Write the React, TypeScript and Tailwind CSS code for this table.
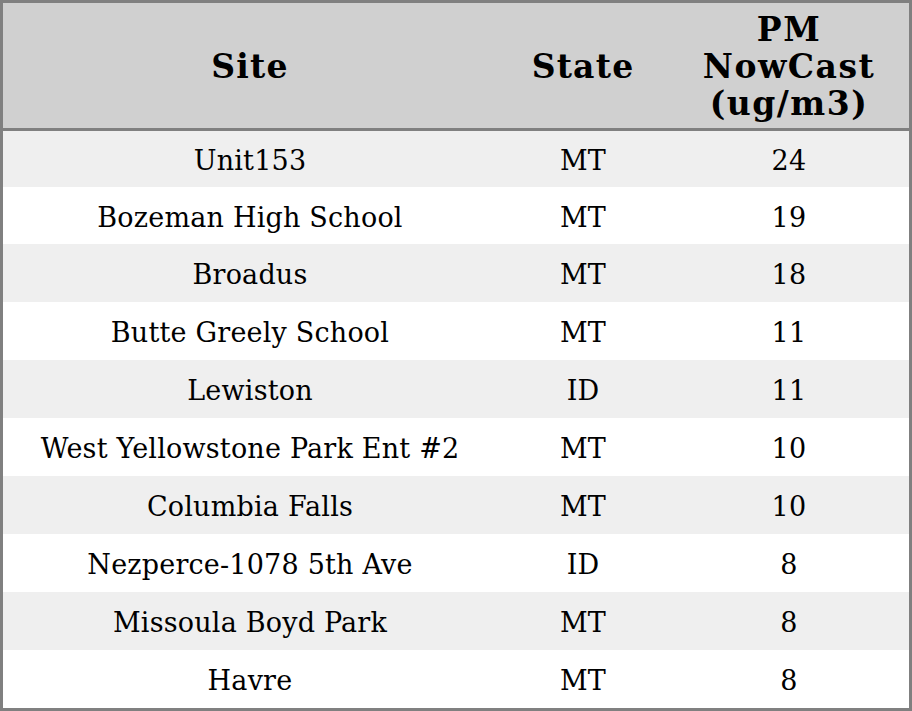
const rows: [string, string, string][] = [
  ["Unit153", "MT", "24"],
  ["Bozeman High School", "MT", "19"],
  ["Broadus", "MT", "18"],
  ["Butte Greely School", "MT", "11"],
  ["Lewiston", "ID", "11"],
  ["West Yellowstone Park Ent #2", "MT", "10"],
  ["Columbia Falls", "MT", "10"],
  ["Nezperce-1078 5th Ave", "ID", "8"],
  ["Missoula Boyd Park", "MT", "8"],
  ["Havre", "MT", "8"],
];

const rowHeights = ["h-[56px]", "h-[57px]", "h-[58px]", "h-[58px]", "h-[58px]", "h-[58px]", "h-[58px]", "h-[58px]", "h-[58px]", "h-[58px]"];

export default function App() {
  return (
    <div className="w-[912px] h-[711px] border-[3px] border-[#808080] bg-white font-['DejaVu_Serif',serif] text-black">
      <table className="w-[906px] table-fixed border-separate border-spacing-0">
        <colgroup>
          <col className="w-[494px]" />
          <col className="w-[172px]" />
          <col className="w-[240px]" />
        </colgroup>
        <thead>
          <tr className="h-[128px] bg-[#d0d0d0]">
            <th className="border-b-[3px] border-[#808080] p-0 pt-[2px] text-[33px] font-bold leading-[37px] tracking-[1.2px]">Site</th>
            <th className="border-b-[3px] border-[#808080] p-0 pt-[2px] text-[33px] font-bold leading-[37px] tracking-[1.2px]">State</th>
            <th className="border-b-[3px] border-[#808080] p-0 pt-[2px] text-[33px] font-bold leading-[37px] tracking-[1.5px]">
              PM
              <br />
              NowCast
              <br />
              (ug/m3)
            </th>
          </tr>
        </thead>
        <tbody>
          {rows.map(([site, state, pm], i) => (
            <tr key={site} className={rowHeights[i] + (i % 2 === 0 ? " bg-[#efefef]" : " bg-white")}>
              <td className="p-0 pt-[4px] text-center text-[27px] leading-[30px] tracking-[0.2px]">{site}</td>
              <td className="p-0 pt-[4px] text-center text-[27px] leading-[30px] tracking-[0.2px]">{state}</td>
              <td className="p-0 pt-[4px] text-center text-[27px] leading-[30px] tracking-[0.2px]">{pm}</td>
            </tr>
          ))}
        </tbody>
      </table>
    </div>
  );
}
